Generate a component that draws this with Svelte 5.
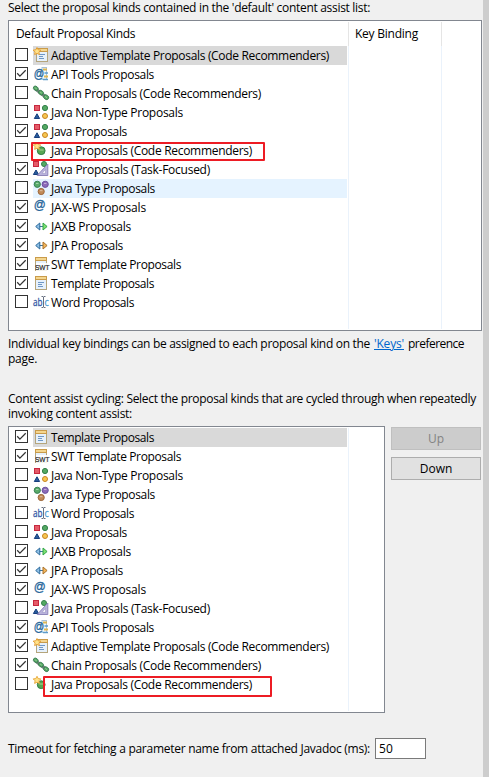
<script>
  const kinds = {
    adaptive: { label: 'Adaptive Template Proposals (Code Recommenders)', width: 278 },
    api: { label: 'API Tools Proposals', width: 103 },
    chain: { label: 'Chain Proposals (Code Recommenders)', width: 210 },
    nontype: { label: 'Java Non-Type Proposals', width: 132 },
    java: { label: 'Java Proposals', width: 76 },
    javacr: { label: 'Java Proposals (Code Recommenders)', width: 201 },
    task: { label: 'Java Proposals (Task-Focused)', width: 159 },
    type: { label: 'Java Type Proposals', width: 104 },
    jaxws: { label: 'JAX-WS Proposals', width: 95 },
    jaxb: { label: 'JAXB Proposals', width: 80 },
    jpa: { label: 'JPA Proposals', width: 72 },
    swt: { label: 'SWT Template Proposals', width: 130 },
    template: { label: 'Template Proposals', width: 103 },
    word: { label: 'Word Proposals', width: 83 }
  };
  let defaults = $state([
    ['adaptive', false], ['api', true], ['chain', false], ['nontype', false],
    ['java', true], ['javacr', false], ['task', true], ['type', false],
    ['jaxws', true], ['jaxb', true], ['jpa', true], ['swt', true],
    ['template', true], ['word', false]
  ]);
  let cycling = $state([
    ['template', true], ['swt', true], ['nontype', false], ['type', false],
    ['word', false], ['java', false], ['jaxb', true], ['jpa', true],
    ['jaxws', true], ['task', false], ['api', true], ['adaptive', true],
    ['chain', true], ['javacr', false]
  ]);
  // Tracks the label so that it fills its intended width.
  function fit(node, width) {
    const natural = node.getBoundingClientRect().width;
    node.style.letterSpacing = (width - natural) / node.textContent.length + 'px';
  }
</script>

{#snippet icon(kind)}
  <svg class="icon" width="17" height="16" viewBox="0 0 17 16">
    {#if kind === 'adaptive' || kind === 'template' || kind === 'swt'}
      {@const x = kind === 'adaptive' ? 3 : 2}
      <rect x={x + 0.5} y="2.5" width="11" height="12" fill="#e6f1fc" stroke="#b5a57c" />
      <rect {x} y="1" width="12" height="4" fill="#c99b4a" />
      <rect x={x + 1} y="2" width="10" height="2" fill="#f4d68f" />
      {#if kind !== 'swt'}
        <path d="M{x + 3} 7.5h6M{x + 3} 9.5h4M{x + 3} 11.5h5" stroke="#6f98c6" />
      {:else}
        <rect x="3" y="7" width="14" height="8" fill="#fff" opacity=".85" />
        <text x="2" y="14" class="swt" textLength="14.5" lengthAdjust="spacingAndGlyphs">SWT</text>
      {/if}
      {#if kind === 'adaptive'}
        <path d="M4 .5l1.2 2.3 2.6.3-1.9 1.9.5 2.6L4 6.4 1.6 7.6l.5-2.6L.2 3.1l2.6-.3z" fill="#ffe28a" stroke="#e29a2f" stroke-width=".9" />
      {/if}
    {:else if kind === 'api'}
      <rect x="9" y="1.5" width="4.5" height="12" fill="#f2f7fb" stroke="#a9c1d6" />
      <path d="M10 3.5h4M11 10.5h4" stroke="#ddb653" stroke-width="2" />
      <path d="M11.5 7h3.5M10 13.5h5" stroke="#5c9bc9" stroke-width="1.5" />
      <text x="0.8" y="11.7" class="at" font-size="12.5" textLength="10.5" lengthAdjust="spacingAndGlyphs">@</text>
    {:else if kind === 'chain'}
      <path d="M1.5 3L14 13" stroke="#6d8178" stroke-width="3.5" />
      <g fill="#53a663" stroke="#397b50" stroke-width=".8">
        <ellipse cx="2.8" cy="3.3" rx="2.6" ry="2" transform="rotate(35 2.8 3.3)" />
        <ellipse cx="8" cy="7.7" rx="2.6" ry="2.1" transform="rotate(35 8 7.7)" />
        <ellipse cx="13.2" cy="12.2" rx="2.7" ry="2.2" transform="rotate(35 13.2 12.2)" />
      </g>
      <path d="M1.8 2.7l2 1.2M6.9 6.8l2 1.5M12.2 11.4l1.8 1.3" stroke="#94cb90" />
    {:else if kind === 'nontype' || kind === 'java'}
      <rect x="1.5" y="1.5" width="5" height="5" fill="#e55b68" stroke="#c6283f" />
      <circle cx="12" cy="4" r="2.6" fill="#54a963" stroke="#32804a" />
      <path d="M4 9.8l2.6 4.7H1.3z" fill="#285b9c" stroke="#163e7d" />
      <circle cx="12" cy="12" r="2.5" fill="#f7c650" stroke="#c78422" />
    {:else if kind === 'javacr'}
      <circle cx="8.2" cy="8.7" r="3.9" fill="#58a653" stroke="#347f48" />
      <path d="M6.5 8h4" stroke="#a9d296" />
      <path d="M4 .3l1.2 2.3 2.6.3-1.9 1.9.5 2.6L4 6.2 1.6 7.4l.5-2.6L.2 2.9l2.6-.3z" fill="#ffe28a" stroke="#e5a537" stroke-width=".9" />
    {:else if kind === 'task'}
      <rect x=".5" y=".5" width="5" height="5" fill="#e55b68" stroke="#c6283f" />
      <circle cx="11" cy="3" r="2.5" fill="#54a963" stroke="#32804a" />
      <path d="M3 9l2.6 4.5H.4z" fill="#285b9c" stroke="#163e7d" />
      <path d="M14.8 3v11.5H4.2z" fill="#b9b3dc" stroke="#8f87bb" />
      <path d="M12.5 8.5v3.8H9z" fill="#fff" stroke="#9992c2" stroke-width=".6" />
    {:else if kind === 'type'}
      <circle cx="4.3" cy="4.3" r="3.1" fill="#58aa69" stroke="#378052" />
      <circle cx="12.2" cy="4.3" r="3.1" fill="#8c6bb8" stroke="#6952a0" />
      <circle cx="8.2" cy="11.5" r="3.1" fill="#c18a57" stroke="#9e683b" />
      <path d="M3 3.5h2.5M11 3.5h2.5M7 10.7h2.5" stroke="#fff" opacity=".45" />
    {:else if kind === 'jaxws'}
      <text x="0.8" y="10.3" class="at" font-size="13.5" textLength="12" lengthAdjust="spacingAndGlyphs">@</text>
    {:else if kind === 'jaxb' || kind === 'jpa'}
      <path d="M5 8.5h7" stroke="#3c759c" />
      <path d="M6.8 5v7L2.7 8.5z" fill="#8fc0e6" stroke="#2c6a9c" />
      <path d="M10 5v7l4.1-3.5z" fill={kind === 'jaxb' ? '#7fe070' : '#f2b65a'} stroke={kind === 'jaxb' ? '#30a647' : '#a9712a'} />
    {:else}
      <text x="0" y="12" class="word" textLength="9.5" lengthAdjust="spacingAndGlyphs">ab</text>
      <text x="11.5" y="12" class="word c" textLength="4.3" lengthAdjust="spacingAndGlyphs">c</text>
      <path d="M8.5 2.5h1.5l.5 1 .5-1h1.5M10.5 3v10M8.5 13.5h1.5l.5-1 .5 1h1.5" fill="none" stroke="#687080" />
    {/if}
  </svg>
{/snippet}

{#snippet rows(items, selected, hovered)}
  {#each items as item, i}
    <div class="row">
      <button class="check" aria-label={kinds[item[0]].label} onclick={() => (item[1] = !item[1])}>
        {#if item[1]}<svg width="11" height="11" viewBox="0 0 11 11"><path d="M1.2 5.3l2.7 2.8L9.7 2.2" fill="none" stroke="#333" stroke-width="1.25" /></svg>{/if}
      </button>
      <div class="item" class:selected={i === selected} class:hovered={i === hovered}>
        {@render icon(item[0])}
        <span use:fit={kinds[item[0]].width}>{kinds[item[0]].label}</span>
        {#if item[0] === 'javacr'}<i class="mark" class:low={items[0][0] === 'template'}></i>{/if}
      </div>
    </div>
  {/each}
{/snippet}

<div class="page">
  <main>
    <p class="line intro"><span use:fit={362}>Select the proposal kinds contained in the 'default' content assist list:</span></p>
    <section class="table first">
      <header><div class="h1"><span use:fit={119}>Default Proposal Kinds</span></div><div class="h2"><span use:fit={63}>Key Binding</span></div></header>
      <div class="body"><div class="col">{@render rows(defaults, 0, 7)}</div><div class="binding"></div></div>
    </section>
    <div class="note">
      <p class="line"><span use:fit={362}>Individual key bindings can be assigned to each proposal kind on the</span><a href="#keys"><span use:fit={30}>'Keys'</span></a><span use:fit={56}>preference</span></p>
      <p class="line"><span use:fit={29}>page.</span></p>
    </div>
    <div class="cycle">
      <p class="line"><span use:fit={468}>Content assist cycling: Select the proposal kinds that are cycled through when repeatedly</span></p>
      <p class="line"><span use:fit={124}>invoking content assist:</span></p>
    </div>
    <div class="split">
      <section class="table second"><div class="body"><div class="col">{@render rows(cycling, 0, -1)}</div></div></section>
      <div class="buttons"><button disabled>Up</button><button>Down</button></div>
    </div>
    <label class="timeout"><span use:fit={362}>Timeout for fetching a parameter name from attached Javadoc (ms):</span><input value="50" /></label>
  </main>
  <aside></aside>
</div>

<style>
  .page { display: flex; width: 489px; height: 777px; overflow: hidden; background: #f0f0f0; color: #000; font: 12px/15px 'Open Sans', 'Noto Sans', sans-serif; }
  .page * { box-sizing: border-box; }
  main { width: 483px; padding-left: 8px; }
  aside { width: 6px; background: #cdcdcd; }
  span { white-space: pre; flex: none; }
  .line { display: flex; gap: 4px; margin: 0; height: 15px; }
  .intro { height: 20px; }
  .table { border: 1px solid #828790; background: #fff; padding: 1px; }
  .first { width: 474px; height: 311px; display: flex; flex-direction: column; }
  header { display: flex; height: 24px; line-height: 24px; }
  .h1 { width: 339px; padding-left: 6px; border-right: 1px solid #e5e5e5; }
  .h2 { width: 93px; padding-left: 6px; border-right: 1px solid #e5e5e5; }
  .body { display: flex; flex: 1; height: 100%; }
  .col { width: 339px; border-right: 1px solid #eaf2fb; }
  .binding { width: 93px; border-right: 1px solid #eaf2fb; }
  .row { display: flex; height: 19px; padding-left: 5px; }
  .check { width: 13px; height: 13px; margin: 2px 5px 0 0; padding: 0; border: 1px solid #333; background: #fff; }
  .check svg { display: block; }
  .item { position: relative; display: flex; width: 314px; line-height: 19px; }
  .selected { background: #d9d9d9; }
  .hovered { background: #e5f3ff; }
  .icon { width: 17px; height: 16px; margin: 1px 1px 0 0; overflow: visible; }
  .at { font-family: 'Liberation Sans', sans-serif; fill: #28679b; stroke: #28679b; stroke-width: .35px; }
  .swt { font: 8px 'Liberation Sans', sans-serif; fill: #222; stroke: #222; stroke-width: .2px; }
  .word { font: 11px 'Open Sans', sans-serif; fill: #3158a5; stroke: #3158a5; stroke-width: .3px; }
  .word.c { fill: #4b9bd3; stroke: #4b9bd3; }
  .mark { position: absolute; left: -2px; top: 1px; width: 234px; height: 19px; border: 2px solid #ed1c24; border-radius: 1px; }
  .mark.low { left: 10px; top: 1px; width: 229px; height: 21px; }
  .note { height: 60px; padding-top: 5px; }
  a { color: #0066cc; text-decoration: underline; }
  .cycle { height: 35px; }
  .split { display: flex; gap: 6px; height: 287px; }
  .second { width: 377px; height: 287px; }
  .buttons { display: flex; flex-direction: column; gap: 7px; padding-top: 1px; }
  .buttons button { width: 90px; height: 23px; padding: 0; border: 1px solid #adadad; background: #e1e1e1; font: inherit; color: #000; }
  .buttons button:disabled { background: #ccc; border-color: #bfbfbf; color: #838383; }
  .timeout { display: flex; align-items: center; gap: 5px; height: 21px; margin-top: 25px; }
  input { width: 51px; height: 21px; padding: 0 3px; border: 1px solid #7a7a7a; background: #fff; font: inherit; color: #000; outline: none; }
</style>
